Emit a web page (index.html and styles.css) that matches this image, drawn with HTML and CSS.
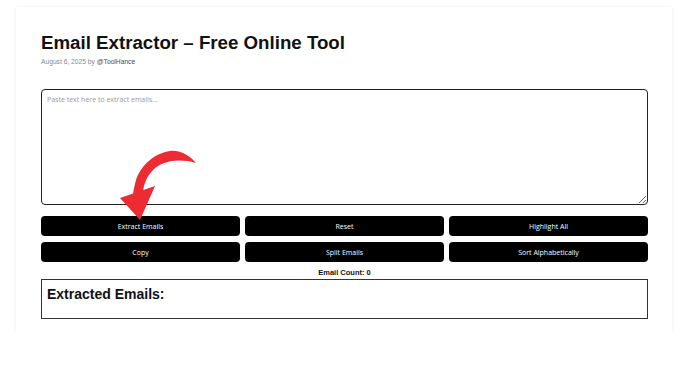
FILE: index.html
```html
<!DOCTYPE html>
<html>
<head>
<meta charset="utf-8">
<link rel="stylesheet" href="styles.css">
</head>
<body>
<div class="page">
  <div class="card">
    <h1 class="title">Email Extractor – Free Online Tool</h1>
    <div class="meta">August 6, 2025 by <span class="author">@ToolHance</span></div>
    <textarea class="input" placeholder="Paste text here to extract emails..."></textarea>
    <div class="buttons">
      <button class="btn">Extract Emails</button>
      <button class="btn">Reset</button>
      <button class="btn">Highlight All</button>
      <button class="btn">Copy</button>
      <button class="btn">Split Emails</button>
      <button class="btn">Sort Alphabetically</button>
    </div>
    <div class="count">Email Count: 0</div>
    <div class="output">
      <h2 class="output-title">Extracted Emails:</h2>
    </div>
    <svg class="arrow" width="100" height="85" viewBox="0 0 100 85">
      <path d="M96,23 C88,14 79,10 70,11 C55,13 41,25 36,40 C34,47 33,52 33,56 L43,54 C43,45 47,36 53,30 C62,21 78,18 96,23 Z" fill="#ec2b33"/>
      <polygon points="20,58 55,46 40,80" fill="#ec2b33"/>
    </svg>
  </div>
</div>
</body>
</html>
```

FILE: styles.css
```css
html, body {
  margin: 0;
  padding: 0;
  background: #ffffff;
}
.page {
  padding: 7px 14px 0 16px;
}
.card {
  position: relative;
  box-sizing: border-box;
  width: 656px;
  height: 325px;
  padding: 24px 24px 0 25px;
  background: #fff;
  box-shadow: 0 0 3px rgba(0, 0, 0, 0.09);
  font-family: "Liberation Sans", Arial, sans-serif;
}
.title {
  margin: 0;
  font-size: 18.7px;
  line-height: 23px;
  font-weight: bold;
  color: #111;
}
.meta {
  margin-top: 3px;
  font-size: 6.7px;
  line-height: 9px;
  color: #888;
}
.author {
  color: #3b4a6b;
}
.input {
  display: block;
  box-sizing: border-box;
  width: 607px;
  height: 116px;
  margin-top: 23px;
  padding: 5px 5px;
  border: 1.5px solid #222;
  border-radius: 4px;
  font-family: "Open Sans", sans-serif;
  font-size: 7px;
  resize: vertical;
}
.input::placeholder {
  color: #999;
}
.buttons {
  display: grid;
  grid-template-columns: repeat(3, 1fr);
  gap: 6px 5px;
  margin-top: 11px;
}
.btn {
  height: 20px;
  padding: 0;
  border: none;
  border-radius: 4px;
  background: #000;
  color: #fff;
  font-family: "Open Sans", sans-serif;
  font-size: 7px;
}
.count {
  margin-top: 5px;
  text-align: center;
  font-size: 7.5px;
  line-height: 11px;
  font-weight: bold;
  color: #111;
}
.output {
  box-sizing: border-box;
  height: 40px;
  margin-top: 1px;
  padding: 6px 5px;
  border: 1px solid #333;
}
.output-title {
  margin: 0;
  font-size: 14px;
  line-height: 17px;
  font-weight: bold;
  color: #111;
}
.arrow {
  position: absolute;
  left: 84px;
  top: 133px;
}
```
